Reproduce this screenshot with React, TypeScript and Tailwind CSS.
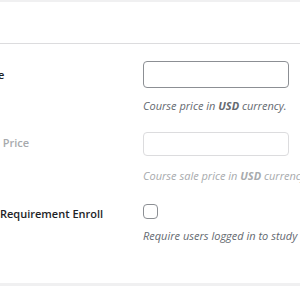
export default function App() {
  return (
    <div className="h-[286px] w-[300px] overflow-hidden bg-[#f0f0f1] pt-[2px] font-['Open_Sans',sans-serif]">
      <div className="h-[281px] bg-white">
        <div className="h-[42px] border-b border-[#dcdcde]" />
        <div className="flex flex-col">
          <div className="flex h-[70px] pt-[17px]">
            <div className="w-[143px] shrink-0 overflow-hidden">
              <span className="ml-[-62px] block whitespace-nowrap pt-[6px] text-[11px] font-semibold text-[#1d2327]">
                Course Price
              </span>
            </div>
            <div className="flex flex-col">
              <input type="text" className="h-[27px] w-[146px] rounded-[4px] border border-[#8c8f94] bg-white" />
              <p className="mt-[10px] whitespace-nowrap text-[11px] italic text-[#646970]">
                Course price in <b>USD</b> currency.
              </p>
            </div>
          </div>
          <div className="flex h-[70px] pt-[18px]">
            <div className="w-[143px] shrink-0 overflow-hidden">
              <span className="ml-[-22px] block whitespace-nowrap pt-[3px] text-[11px] font-semibold text-[#a7aaad]">
                Sale Price
              </span>
            </div>
            <div className="flex flex-col">
              <input type="text" disabled className="h-[26px] w-[146px] rounded-[4px] border border-[#dcdcde] bg-white" />
              <p className="mt-[12px] whitespace-nowrap text-[11px] italic text-[#a7aaad]">
                Course sale price in <b>USD</b> currency.
              </p>
            </div>
          </div>
          <div className="flex pt-[20px]">
            <div className="w-[143px] shrink-0 overflow-hidden">
              <span className="block whitespace-nowrap pt-[2px] text-[11px] font-semibold text-[#1d2327]">
                Requirement Enroll
              </span>
            </div>
            <div className="flex flex-col">
              <input type="checkbox" className="h-[15px] w-[15px] appearance-none rounded-[4px] border border-[#8c8f94] bg-white" />
              <p className="mt-[9px] whitespace-nowrap text-[11px] italic text-[#646970]">
                Require users logged in to study
              </p>
            </div>
          </div>
        </div>
      </div>
    </div>
  );
}
